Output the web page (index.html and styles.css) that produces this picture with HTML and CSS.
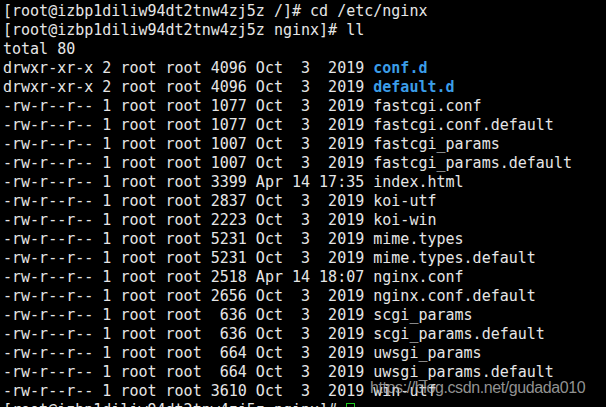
FILE: index.html
```html
<!DOCTYPE html>
<html>
<head>
<meta charset="utf-8">
<link rel="stylesheet" href="styles.css">
</head>
<body>
<div class="term">
<pre class="out">[root@izbp1diliw94dt2tnw4zj5z /]# cd /etc/nginx
[root@izbp1diliw94dt2tnw4zj5z nginx]# ll
total 80
drwxr-xr-x 2 root root 4096 Oct  3  2019 <span class="dir">conf.d</span>
drwxr-xr-x 2 root root 4096 Oct  3  2019 <span class="dir">default.d</span>
-rw-r--r-- 1 root root 1077 Oct  3  2019 fastcgi.conf
-rw-r--r-- 1 root root 1077 Oct  3  2019 fastcgi.conf.default
-rw-r--r-- 1 root root 1007 Oct  3  2019 fastcgi_params
-rw-r--r-- 1 root root 1007 Oct  3  2019 fastcgi_params.default
-rw-r--r-- 1 root root 3399 Apr 14 17:35 index.html
-rw-r--r-- 1 root root 2837 Oct  3  2019 koi-utf
-rw-r--r-- 1 root root 2223 Oct  3  2019 koi-win
-rw-r--r-- 1 root root 5231 Oct  3  2019 mime.types
-rw-r--r-- 1 root root 5231 Oct  3  2019 mime.types.default
-rw-r--r-- 1 root root 2518 Apr 14 18:07 nginx.conf
-rw-r--r-- 1 root root 2656 Oct  3  2019 nginx.conf.default
-rw-r--r-- 1 root root  636 Oct  3  2019 scgi_params
-rw-r--r-- 1 root root  636 Oct  3  2019 scgi_params.default
-rw-r--r-- 1 root root  664 Oct  3  2019 uwsgi_params
-rw-r--r-- 1 root root  664 Oct  3  2019 uwsgi_params.default
-rw-r--r-- 1 root root 3610 Oct  3  2019 win-utf
[root@izbp1diliw94dt2tnw4zj5z nginx]# <span class="cursor"> </span></pre>
<div class="watermark">https://blog.csdn.net/gudada010</div>
</div>
</body>
</html>
```
FILE: styles.css
```css
html, body {
  margin: 0;
  padding: 0;
  background: #000;
  overflow: hidden;
}
.term {
  position: relative;
  width: 606px;
  height: 407px;
  background: #000;
  overflow: hidden;
}
.out {
  margin: 0;
  padding: 2px 0 0 3px;
  font-family: "DejaVu Sans Mono", monospace;
  font-size: 15px;
  line-height: 19px;
  color: #e6e6e6;
}
.dir {
  color: #3b9de8;
  font-weight: bold;
}
.cursor {
  display: inline-block;
  width: 7px;
  height: 15px;
  border: 1px solid #1ec81e;
  vertical-align: -3px;
}
.watermark {
  position: absolute;
  left: 370px;
  top: 380px;
  font-family: "Liberation Sans", Arial, sans-serif;
  font-size: 16px;
  line-height: 16px;
  letter-spacing: -0.4px;
  color: rgba(185, 185, 185, 0.8);
  white-space: nowrap;
}
```
